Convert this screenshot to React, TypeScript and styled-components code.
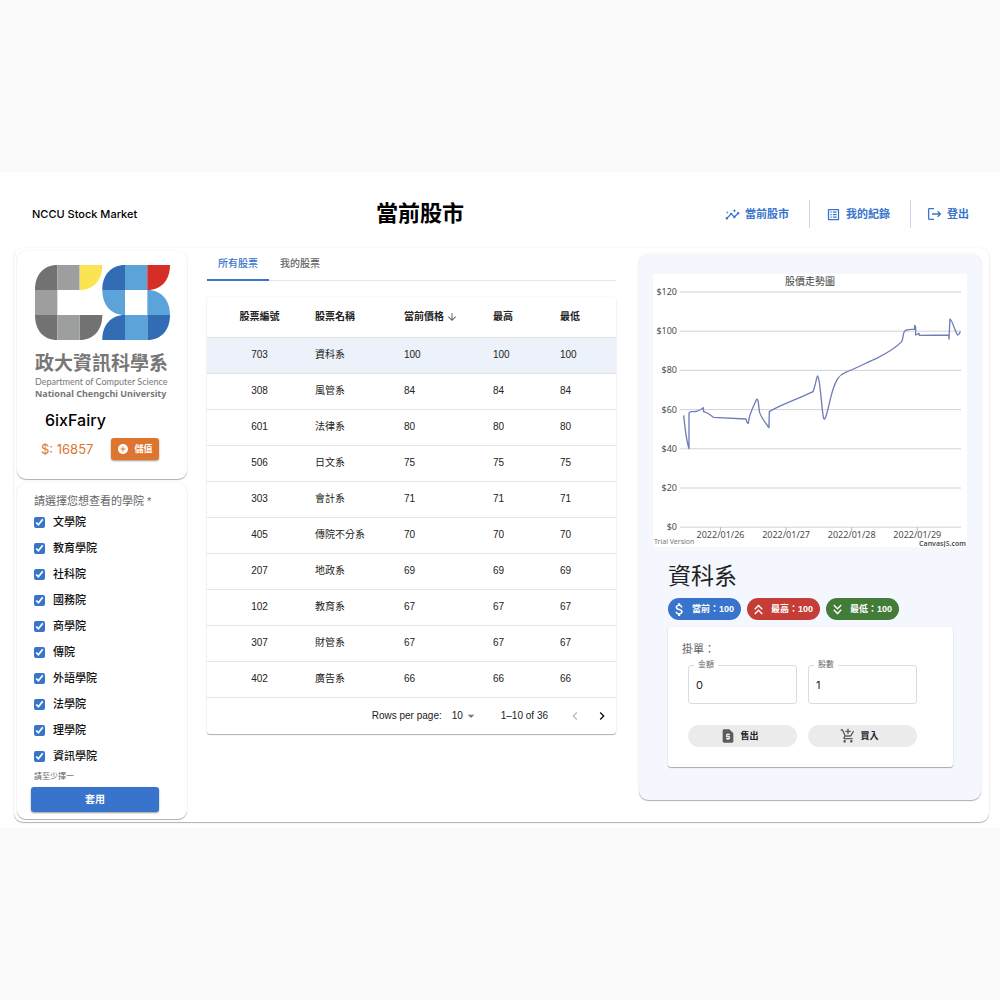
import React, { useState } from "react";
import styled, { createGlobalStyle, css } from "styled-components";
import {
  MdAddCircle,
  MdAddShoppingCart,
  MdArrowDownward,
  MdArrowDropDown,
  MdAttachMoney,
  MdInsights,
  MdKeyboardArrowLeft,
  MdKeyboardArrowRight,
  MdKeyboardDoubleArrowDown,
  MdKeyboardDoubleArrowUp,
  MdListAlt,
  MdRequestPage,
} from "react-icons/md";

const blue = "#3874cb";
const ui = `"Liberation Sans", "Noto Sans CJK TC", sans-serif`;
const brandFont = `Inter, "Noto Sans CJK TC", sans-serif`;
const humanist = `"Noto Sans", "Noto Sans CJK TC", sans-serif`;

const GlobalStyle = createGlobalStyle`
  *, *::before, *::after { box-sizing: border-box; }
  body { margin: 0; background: #fafafa; color: #222; font: 10px/16px ${ui}; }
  button, input, select { font: inherit; color: inherit; }
  button { cursor: pointer; }
  h1, h2, p { margin: 0; }
`;

const raised = css`
  background: #fff;
  box-shadow: 0 1px 1px rgba(0, 0, 0, 0.3), 0 0 2px rgba(0, 0, 0, 0.08);
`;

const Screen = styled.div`
  min-height: 100vh;
  display: flex;
  flex-direction: column;
  justify-content: center;
`;

const Page = styled.div`
  background: #fff;
  padding: 0 11px 6px 14px;
`;

const Header = styled.header`
  display: grid;
  grid-template-columns: minmax(120px, 344px) 1fr auto;
  align-items: center;
  height: 76px;
  padding: 8px 20px 0 18px;
`;

const Brand = styled.a`
  font: 500 11px/16px ${brandFont};
  color: #000;
  text-decoration: none;
`;

const PageTitle = styled.h1`
  font: 700 22px/32px ${ui};
  color: #000;
`;

const Nav = styled.nav`
  display: flex;
  align-items: center;
`;

const NavLink = styled.a`
  display: flex;
  align-items: center;
  gap: 5px;
  height: 28px;
  font-size: 11px;
  font-weight: 700;
  color: ${blue};
  text-decoration: none;

  & + & {
    margin-left: 20px;
    padding-left: 16px;
    border-left: 1px solid #ccd8ee;
  }
`;

const Shell = styled.main`
  ${raised}
  display: grid;
  grid-template-columns: 170px minmax(0, 1fr) 342px;
  column-gap: 20px;
  align-items: start;
  padding: 0 8px 0 3px;
  border-radius: 9px;
`;

const Sidebar = styled.aside`
  display: flex;
  flex-direction: column;
  gap: 4px;
  padding: 3px 0;
`;

const Profile = styled.section`
  ${raised}
  border-radius: 9px;
  padding: 14px 17px 19px 18px;
`;

const Logo = styled.svg`
  display: block;
  width: 100%;
  height: 75px;
`;

const LogoName = styled.p`
  margin-top: 12px;
  font: 700 19px/24px ${ui};
  color: #777;
  white-space: nowrap;
`;

const LogoLine = styled.p<{ $strong?: boolean }>`
  font: ${(p) => (p.$strong ? `700 9px/12px ${humanist}` : "400 9px/12px Lato, sans-serif")};
  color: #777;
  white-space: nowrap;
`;

const UserName = styled.h2`
  margin: 8px 10px 6px;
  font: 500 16px/24px ${brandFont};
  color: #000;
`;

const Wallet = styled.div`
  display: flex;
  align-items: center;
  justify-content: space-between;
  padding: 0 11px 0 6px;
`;

const Balance = styled.span`
  font: 400 13px/20px ${brandFont};
  color: #de752f;
  white-space: nowrap;
`;

const SolidButton = styled.button<{ $tone: string }>`
  display: flex;
  align-items: center;
  justify-content: center;
  gap: 5px;
  border: 0;
  border-radius: 3px;
  background: ${(p) => p.$tone};
  color: #fff;
  font-weight: 700;
  line-height: 12px;
  box-shadow: 0 1px 2px rgba(0, 0, 0, 0.4);
`;

const TopUp = styled(SolidButton)`
  width: 48px;
  height: 22px;
  padding: 0;
  font-size: 9px;
`;

const Filter = styled.form`
  ${raised}
  border-radius: 9px;
  padding: 10px 28px 7px 14px;
`;

const Group = styled.fieldset`
  margin: 0;
  padding: 0 0 0 3px;
  border: 0;
  min-width: 0;
`;

const GroupTitle = styled.legend`
  padding: 0;
  font-size: 11px;
  line-height: 16px;
  color: #666;
  white-space: nowrap;
`;

const Option = styled.label`
  display: flex;
  align-items: center;
  gap: 8px;
  height: 26px;
  font-size: 11px;
  font-weight: 500;
  color: #111;
`;

const Tick = styled.input`
  width: 11px;
  height: 11px;
  margin: 0;
  accent-color: ${blue};
`;

const Hint = styled.p`
  padding-left: 3px;
  font-size: 8px;
  line-height: 16px;
  color: #666;
`;

const Apply = styled(SolidButton)`
  width: 100%;
  height: 25px;
  margin-top: 2px;
`;

const Market = styled.section`
  padding-right: 3px;
`;

const Tabs = styled.div`
  display: flex;
  height: 33px;
  border-bottom: 1px solid #e6e6e6;
`;

const Tab = styled.button<{ $active: boolean }>`
  padding: 0 11px;
  margin-bottom: -1px;
  border: 0;
  border-bottom: 2px solid ${(p) => (p.$active ? blue : "transparent")};
  background: none;
  font-weight: 500;
  color: ${(p) => (p.$active ? blue : "#666")};
`;

const TableCard = styled.div`
  ${raised}
  margin-top: 16px;
  border-radius: 3px;
`;

const Table = styled.table`
  width: 100%;
  table-layout: fixed;
  border-collapse: collapse;
`;

const IdCol = styled.col`
  width: 97px;
`;
const WideCol = styled.col`
  width: 89px;
`;
const NarrowCol = styled.col`
  width: 67px;
`;

const cell = css`
  padding: 0 0 0 11px;
  border-bottom: 1px solid #e3e3e3;
  text-align: left;
  white-space: nowrap;

  &:first-child {
    padding: 0 8px 0 16px;
    text-align: center;
  }
`;

const HeadCell = styled.th`
  ${cell}
  height: 40px;
  font-weight: 700;
`;

const SortLabel = styled.span`
  display: flex;
  align-items: center;
  gap: 2px;
  svg {
    color: #666;
  }
`;

const Row = styled.tr<{ $selected: boolean }>`
  background: ${(p) => (p.$selected ? "#edf2fa" : "transparent")};
`;

const Cell = styled.td`
  ${cell}
  height: 36px;
`;

const Pager = styled.div`
  display: flex;
  align-items: center;
  justify-content: flex-end;
  height: 36px;
  padding-right: 1px;
`;

const SizePicker = styled.div`
  display: grid;
  align-items: center;
  width: 27px;
  margin: 0 22px 0 10px;

  > * {
    grid-area: 1 / 1;
  }
  svg {
    justify-self: end;
    color: #777;
    pointer-events: none;
  }
`;

const SizeSelect = styled.select`
  appearance: none;
  width: 100%;
  padding: 0;
  border: 0;
  background: none;
`;

const Count = styled.span`
  margin-right: 13px;
`;

const PageButton = styled.button`
  display: flex;
  justify-content: center;
  width: 27px;
  padding: 0;
  border: 0;
  background: none;
  color: #111;
  &:disabled {
    color: #bbb;
  }
`;

const Detail = styled.section`
  ${raised}
  margin-top: 6px;
  padding: 20px 14px 33px;
  border-radius: 9px;
  background: #f4f7fd;
`;

const Chart = styled.svg`
  display: block;
  width: 100%;
  background: #fff;
  font: 9px ${humanist};
  fill: #4c4c4c;
`;

const Order = styled.div`
  padding: 0 14px 0 15px;
`;

const StockName = styled.h2`
  margin-top: 12px;
  font: 400 23px/34px ${ui};
  color: #222;
`;

const Chips = styled.div`
  display: flex;
  gap: 6px;
  margin-top: 5px;
`;

const Chip = styled.span<{ $tone: string }>`
  display: flex;
  align-items: center;
  gap: 4px;
  height: 22px;
  padding: 0 7px 0 3px;
  border-radius: 11px;
  background: ${(p) => p.$tone};
  color: #fff;
  font-size: 9px;
  font-weight: 700;
  white-space: nowrap;
`;

const OrderForm = styled.form`
  ${raised}
  margin-top: 7px;
  padding: 14px 14px 20px;
  border-radius: 3px;
`;

const OrderTitle = styled.p`
  font-size: 11px;
  color: #666;
`;

const Pair = styled.div<{ $top: number }>`
  display: grid;
  grid-template-columns: repeat(2, 109px);
  gap: 11px;
  margin-top: ${(p) => p.$top}px;
  padding-left: 6px;
`;

const Field = styled.fieldset`
  height: 44px;
  min-width: 0;
  margin: 0;
  padding: 0 5px;
  border: 1px solid #dcdcdc;
  border-radius: 3px;
`;

const FieldName = styled.legend`
  padding: 0 4px;
  font-size: 8px;
  line-height: 10px;
  color: #666;
`;

const FieldInput = styled.input`
  display: block;
  width: 100%;
  height: 30px;
  padding: 0 2px;
  border: 0;
  outline: 0;
  background: none;
  font: 11px/16px ${brandFont};
`;

const PillButton = styled.button`
  display: flex;
  align-items: center;
  justify-content: center;
  gap: 4px;
  height: 22px;
  padding: 0 6px 0 0;
  border: 0;
  border-radius: 11px;
  background: #ebebeb;
  font-size: 9px;
  font-weight: 700;
  svg {
    color: #5c5c5c;
  }
`;

const colleges = ["文學院", "教育學院", "社科院", "國務院", "商學院", "傳院", "外語學院", "法學院", "理學院", "資訊學院"];

const stocks: [string, string, number][] = [
  ["703", "資科系", 100],
  ["308", "風管系", 84],
  ["601", "法律系", 80],
  ["506", "日文系", 75],
  ["303", "會計系", 71],
  ["405", "傳院不分系", 70],
  ["207", "地政系", 69],
  ["102", "教育系", 67],
  ["307", "財管系", 67],
  ["402", "廣告系", 66],
];

const priceTicks = [120, 100, 80, 60, 40, 20, 0];
const dayTicks = ["2022/01/26", "2022/01/27", "2022/01/28", "2022/01/29"];

function SignOutIcon() {
  return (
    <svg width="15" height="14" viewBox="0 0 15 14" fill="none" stroke="currentColor" strokeWidth="1.3" aria-hidden="true">
      <path d="M7 1.6H2.4Q1.6 1.6 1.6 2.4V11.6Q1.6 12.4 2.4 12.4H7M5 7H13.2M10.6 4.2L13.4 7L10.6 9.8" />
    </svg>
  );
}

function DepartmentLogo() {
  return (
    <Logo viewBox="0 0 405 225" preserveAspectRatio="none" role="img" aria-label="CS">
      <path fill="#727272" d="M67 0V75H0C0 30 25 0 67 0ZM0 150H67V225C25 225 0 195 0 150ZM134 150H202C202 195 176 225 134 225Z" />
      <path fill="#9d9f9e" d="M67 0H134V75H67ZM0 75H67V150H0ZM67 150H134V225H67Z" />
      <path fill="#fae452" d="M134 0H202C202 45 176 75 134 75Z" />
      <path fill="#316cb4" d="M270 0V75H202C202 30 228 0 270 0ZM270 150V225H202C202 180 228 150 270 150ZM337 150H405C405 195 379 225 337 225Z" />
      <path fill="#5ba3d9" d="M270 0H337V75H270ZM202 75H270V150C228 150 202 120 202 75ZM337 75C379 75 405 105 405 150H337ZM270 150H337V225H270Z" />
      <path fill="#d62d27" d="M337 0H405C405 45 379 75 337 75Z" />
    </Logo>
  );
}

function PriceChart() {
  return (
    <Chart viewBox="0 0 314 273" role="img" aria-label="股價走勢圖">
      <text x="157" y="11" textAnchor="middle" fontSize="10" fill="#444">股價走勢圖</text>
      {priceTicks.map((value, i) => {
        const y = 18 + i * 39.2;
        return (
          <g key={value}>
            <line x1="27" x2="308" y1={y} y2={y} stroke="#d2d2d2" />
            <text x="24" y={y + 3} textAnchor="end">{`$${value}`}</text>
          </g>
        );
      })}
      {dayTicks.map((day, i) => (
        <g key={day}>
          <line x1={67.5 + i * 65.6} x2={67.5 + i * 65.6} y1="253" y2="257" stroke="#bbb" />
          <text x={67.5 + i * 65.6} y="264" textAnchor="middle">{day}</text>
        </g>
      ))}
      <path
        transform="translate(-13 -9) scale(0.3333)"
        fill="none"
        stroke="#6f7db8"
        strokeWidth="4"
        strokeLinejoin="round"
        d="M131 451C135 490 140 530 147 551V446C148 438 152 440 160 440C172 440 180 436 190 428L191 440C204 443 212 450 220 457L318 462C320 470 322 476 325 475C326 450 340 425 350 403C356 400 356 430 359 443C365 460 378 476 387 488L388 440C425 418 470 404 519 380C525 368 530 334 533 333C541 340 545 440 551 460C557 475 568 410 577 380C588 345 597 330 615 323C650 309 680 293 710 280C740 265 770 246 785 230C791 220 788 200 796 197C805 192 815 194 824 193V181L827 186V210L837 205L838 211L926 210L927 222L930 162C937 165 945 200 953 210C958 210 960 202 961 199"
      />
      <text x="1" y="270" fontSize="7" fill="#777">Trial Version</text>
      <text x="313" y="272" fontSize="7" textAnchor="end" fontWeight="600">CanvasJS.com</text>
    </Chart>
  );
}

export default function App() {
  const [tab, setTab] = useState(0);
  const [selected, setSelected] = useState("703");
  const stop = (e: React.FormEvent) => e.preventDefault();

  return (
    <Screen>
      <GlobalStyle />
      <Page>
        <Header>
          <Brand href="#">NCCU Stock Market</Brand>
          <PageTitle>當前股市</PageTitle>
          <Nav>
            <NavLink href="#market"><MdInsights size={15} />當前股市</NavLink>
            <NavLink href="#records"><MdListAlt size={15} />我的紀錄</NavLink>
            <NavLink href="#logout"><SignOutIcon />登出</NavLink>
          </Nav>
        </Header>
        <Shell>
          <Sidebar>
            <Profile>
              <DepartmentLogo />
              <LogoName>政大資訊科學系</LogoName>
              <LogoLine>Department of Computer Science</LogoLine>
              <LogoLine $strong>National Chengchi University</LogoLine>
              <UserName>6ixFairy</UserName>
              <Wallet>
                <Balance>$: 16857</Balance>
                <TopUp type="button" $tone="#de752f"><MdAddCircle size={12} />儲值</TopUp>
              </Wallet>
            </Profile>
            <Filter onSubmit={stop}>
              <Group>
                <GroupTitle>請選擇您想查看的學院 *</GroupTitle>
                {colleges.map((name) => (
                  <Option key={name}>
                    <Tick type="checkbox" defaultChecked />
                    {name}
                  </Option>
                ))}
              </Group>
              <Hint>請至少擇一</Hint>
              <Apply type="submit" $tone={blue}>套用</Apply>
            </Filter>
          </Sidebar>

          <Market>
            <Tabs role="tablist">
              {["所有股票", "我的股票"].map((name, i) => (
                <Tab key={name} type="button" role="tab" aria-selected={tab === i} $active={tab === i} onClick={() => setTab(i)}>
                  {name}
                </Tab>
              ))}
            </Tabs>
            <TableCard>
              <Table>
                <colgroup>
                  <IdCol />
                  <WideCol />
                  <WideCol />
                  <NarrowCol />
                  <col />
                </colgroup>
                <thead>
                  <tr>
                    <HeadCell>股票編號</HeadCell>
                    <HeadCell>股票名稱</HeadCell>
                    <HeadCell aria-sort="descending">
                      <SortLabel>當前價格<MdArrowDownward size={12} /></SortLabel>
                    </HeadCell>
                    <HeadCell>最高</HeadCell>
                    <HeadCell>最低</HeadCell>
                  </tr>
                </thead>
                <tbody>
                  {stocks.map(([id, name, price]) => (
                    <Row key={id} $selected={selected === id} onClick={() => setSelected(id)}>
                      <Cell>{id}</Cell>
                      <Cell>{name}</Cell>
                      <Cell>{price}</Cell>
                      <Cell>{price}</Cell>
                      <Cell>{price}</Cell>
                    </Row>
                  ))}
                </tbody>
              </Table>
              <Pager>
                <label htmlFor="page-size">Rows per page:</label>
                <SizePicker>
                  <SizeSelect id="page-size" defaultValue="10">
                    <option>10</option>
                    <option>25</option>
                  </SizeSelect>
                  <MdArrowDropDown size={16} />
                </SizePicker>
                <Count>1–10 of 36</Count>
                <PageButton type="button" disabled aria-label="Previous page"><MdKeyboardArrowLeft size={16} /></PageButton>
                <PageButton type="button" aria-label="Next page"><MdKeyboardArrowRight size={16} /></PageButton>
              </Pager>
            </TableCard>
          </Market>

          <Detail>
            <PriceChart />
            <Order>
              <StockName>資科系</StockName>
              <Chips>
                <Chip $tone={blue}><MdAttachMoney size={17} />當前：100</Chip>
                <Chip $tone="#c43d37"><MdKeyboardDoubleArrowUp size={17} />最高：100</Chip>
                <Chip $tone="#437b39"><MdKeyboardDoubleArrowDown size={17} />最低：100</Chip>
              </Chips>
              <OrderForm onSubmit={stop}>
                <OrderTitle>掛單：</OrderTitle>
                <Pair $top={3}>
                  <Field>
                    <FieldName><label htmlFor="amount">金額</label></FieldName>
                    <FieldInput id="amount" defaultValue="0" />
                  </Field>
                  <Field>
                    <FieldName><label htmlFor="shares">股數</label></FieldName>
                    <FieldInput id="shares" defaultValue="1" />
                  </Field>
                </Pair>
                <Pair $top={21}>
                  <PillButton type="button"><MdRequestPage size={16} />售出</PillButton>
                  <PillButton type="button"><MdAddShoppingCart size={16} />買入</PillButton>
                </Pair>
              </OrderForm>
            </Order>
          </Detail>
        </Shell>
      </Page>
    </Screen>
  );
}
